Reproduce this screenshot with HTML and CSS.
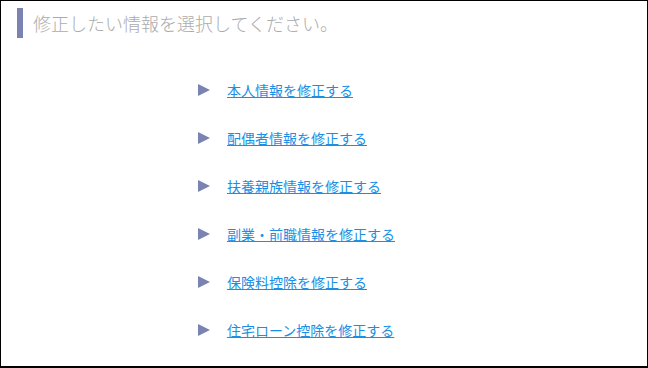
FILE: index.html
```html
<!DOCTYPE html>
<html lang="ja">
<head>
    <meta charset="UTF-8">
    <title>修正情報の選択</title>
    <link rel="stylesheet" href="styles.css">
</head>
<body>
    <div class="container">
        <h2 class="title">修正したい情報を選択してください。</h2>
        <ul class="menu">
            <li class="menu-item"><span class="arrow"></span><a href="#">本人情報を修正する</a></li>
            <li class="menu-item"><span class="arrow"></span><a href="#">配偶者情報を修正する</a></li>
            <li class="menu-item"><span class="arrow"></span><a href="#">扶養親族情報を修正する</a></li>
            <li class="menu-item"><span class="arrow"></span><a href="#">副業・前職情報を修正する</a></li>
            <li class="menu-item"><span class="arrow"></span><a href="#">保険料控除を修正する</a></li>
            <li class="menu-item"><span class="arrow"></span><a href="#">住宅ローン控除を修正する</a></li>
        </ul>
    </div>
</body>
</html>
```
FILE: styles.css
```css
* {
    margin: 0;
    padding: 0;
}

html,
body {
    width: 100%;
    height: 100%;
}

body {
    font-family: "Noto Sans CJK JP", "Noto Sans", sans-serif;
    background: #fff;
}

.container {
    width: 648px;
    height: 368px;
    border: 1px solid #000;
    border-bottom-width: 2px;
    box-sizing: border-box;
}

.title {
    margin: 7px 0 0 16px;
    height: 30px;
    line-height: 30px;
    padding-left: 10px;
    border-left: 6px solid #7b83b3;
    font-size: 18px;
    font-weight: 300;
    color: #ababab;
}

.menu {
    list-style: none;
    margin-top: 28px;
    margin-left: 197px;
}

.menu-item {
    height: 48px;
    display: flex;
    align-items: center;
}

.arrow {
    width: 0;
    height: 0;
    border-top: 6px solid transparent;
    border-bottom: 6px solid transparent;
    border-left: 12px solid #7b83b3;
    margin-right: 17px;
}

.menu-item a {
    font-size: 14px;
    color: #1a8fe3;
    text-decoration: underline;
}
```
